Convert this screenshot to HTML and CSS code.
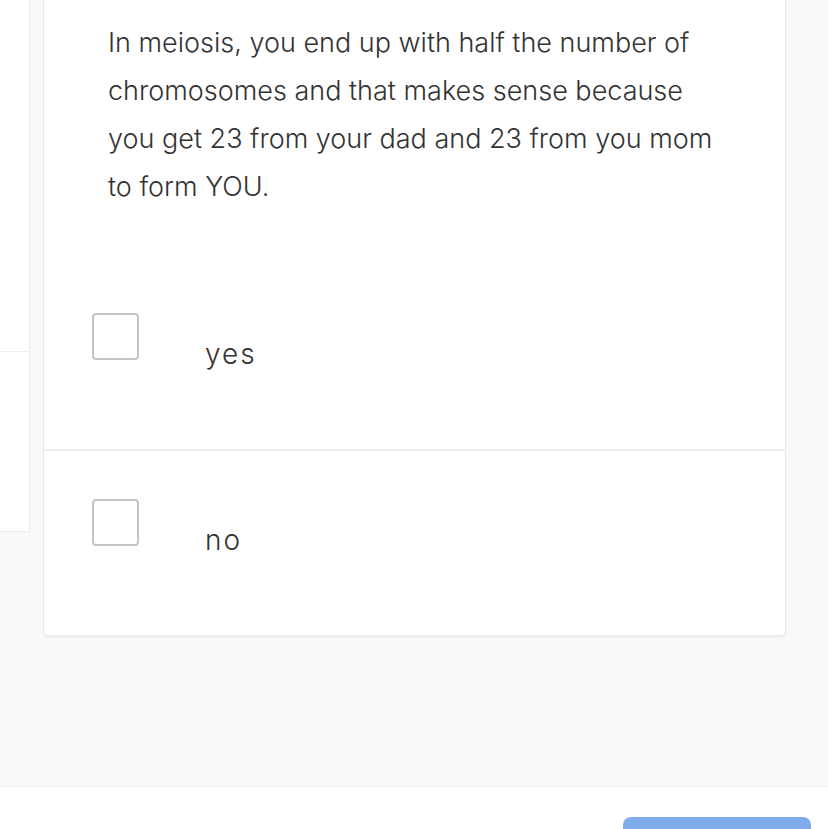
FILE: index.html
```html
<!DOCTYPE html>
<html>
<head>
<meta charset="utf-8">
<link rel="stylesheet" href="styles.css">
</head>
<body>
<div class="main">
  <div class="side"><div class="side-top"></div></div>
  <div class="card">
    <p class="question">In meiosis, you end up with half the number of chromosomes and that makes sense because you get 23 from your dad and 23 from you mom to form YOU.</p>
    <div class="option">
      <span class="box"></span>
      <span class="label">yes</span>
    </div>
    <div class="option last">
      <span class="box"></span>
      <span class="label">no</span>
    </div>
  </div>
</div>
<div class="footer">
  <button class="btn"></button>
</div>
</body>
</html>
```
FILE: styles.css
```css
html, body { margin: 0; padding: 0; }
body {
  width: 828px;
  height: 829px;
  overflow: hidden;
  background: #fff;
  font-family: Inter, "Liberation Sans", sans-serif;
}
.main {
  height: 786px;
  background: #f9f9f9;
  border-bottom: 1px solid #ececec;
  display: flex;
  align-items: flex-start;
}
.side {
  width: 29px;
  height: 531px;
  background: #fff;
  border-right: 1px solid #ececec;
  border-bottom: 1px solid #ececec;
  flex: none;
}
.side-top {
  height: 351px;
  border-bottom: 1px solid #eeeeee;
}
.card {
  margin-left: 13px;
  width: 741px;
  background: #fff;
  border: 1px solid #e8e8e8;
  border-top: none;
  border-radius: 0 0 4px 4px;
  box-shadow: 0 2px 0 #f0f0f0;
  flex: none;
}
.question {
  margin: 0;
  padding: 19px 65px 54px 64px;
  font-size: 27px;
  font-weight: 300;
  line-height: 48px;
  color: #333;
}
.option {
  height: 136px;
  padding: 48px 0 0 48px;
  display: flex;
  align-items: flex-start;
  border-bottom: 2px solid #eeeeee;
}
.option.last { border-bottom: none; height: 136px; }
.box {
  width: 43px;
  height: 43px;
  border: 2px solid #c4c4c4;
  border-radius: 4px;
  flex: none;
}
.label {
  margin-left: 66px;
  margin-top: 21px;
  font-size: 28px;
  font-weight: 300;
  line-height: 40px;
  letter-spacing: 2px;
  color: #333;
}
.footer {
  height: 42px;
  padding-top: 30px;
  display: flex;
  justify-content: flex-end;
  padding-right: 17px;
}
.btn {
  width: 188px;
  height: 40px;
  border: none;
  border-radius: 8px;
  background: #80acec;
}
```
